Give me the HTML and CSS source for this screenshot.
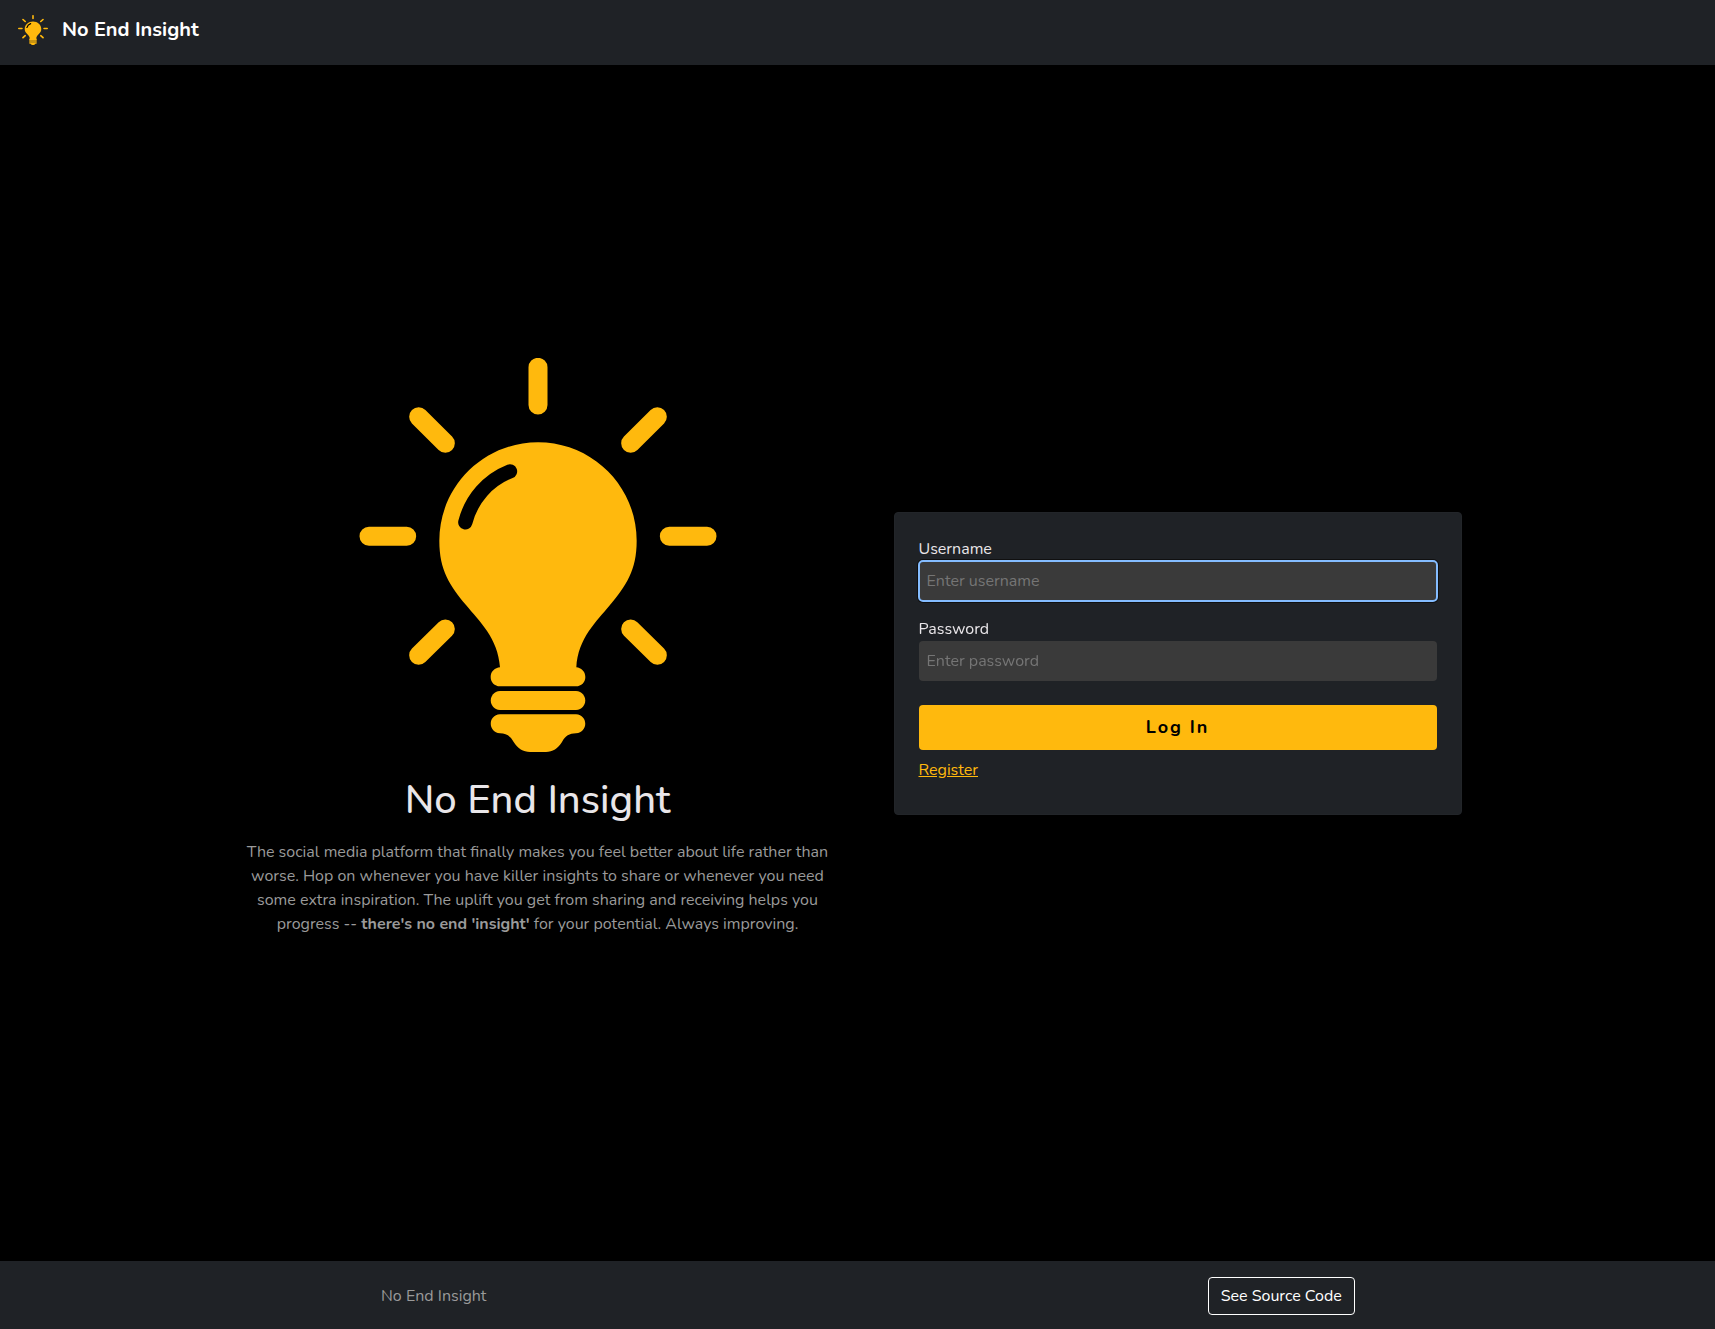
FILE: index.html
```html
<!DOCTYPE html>
<html lang="en">
<head>
<meta charset="utf-8">
<meta name="viewport" content="width=device-width, initial-scale=1">
<title>No End Insight</title>
<link rel="stylesheet" href="styles.css">
</head>
<body>
<header class="navbar">
  <a class="brand" href="#">
    <svg class="brand-icon" viewBox="28 24 1072 1182" preserveAspectRatio="none" aria-hidden="true"><use href="#bulb"/></svg>
    <span>No End Insight</span>
  </a>
</header>

<main class="login-page">
  <section class="intro">
    <svg class="intro-icon" viewBox="24 24 1080 1182" role="img" aria-label="Light bulb">
      <g id="bulb">
        <path class="ray" d="M564 52V165M206 200L286 280M922 200L842 280M57 559H170M958 559H1071M286 837L206 916M842 837L922 916"/>
        <path class="glass" d="M564 277C728 277 860 410 860 572C860 662 828 706 780 765C740 814 684 864 679 952C693 954 706 964 706 981C706 997 694 1009 678 1009H450C434 1009 422 997 422 981C422 964 435 954 450 952C444 864 388 814 348 765C300 706 268 662 268 572C268 410 400 277 564 277Z"/>
        <path class="glass" d="M450 1023H678C715 1026 715 1077 678 1080H450C413 1077 413 1026 450 1023Z"/>
        <path class="glass" d="M450 1093H678C715 1096 715 1146 678 1150C658 1151 646 1157 636 1176C624 1196 608 1206 588 1206H540C520 1206 503 1196 491 1176C481 1157 469 1151 450 1150C413 1146 413 1096 450 1093Z"/>
        <path class="shine" d="M480 364C414 390 364 446 346 517"/>
      </g>
    </svg>
    <h1 class="intro-title">No End Insight</h1>
    <p class="intro-text">The social media platform that finally makes you feel better about life rather than worse. Hop on whenever you have killer insights to share or whenever you need some extra inspiration. The uplift you get from sharing and receiving helps you progress -- <strong>there's no end 'insight'</strong> for your potential. Always improving.</p>
  </section>

  <section class="form-column">
    <form class="card">
      <div class="field">
        <label for="username">Username</label>
        <input class="input" id="username" type="text" placeholder="Enter username" autofocus>
      </div>
      <div class="field">
        <label for="password">Password</label>
        <input class="input" id="password" type="password" placeholder="Enter password">
      </div>
      <button class="submit" type="submit">Log In</button>
      <a class="register" href="#">Register</a>
    </form>
  </section>
</main>

<footer class="footer">
  <span>No End Insight</span>
  <a class="source" href="#">See Source Code</a>
</footer>
</body>
</html>
```
FILE: styles.css
```css
* { box-sizing: border-box; }

body {
  margin: 0;
  min-height: 100vh;
  display: flex;
  flex-direction: column;
  background: #000;
  color: #e9e6e9;
  font: 400 16px/24px Nunito, Lato, sans-serif;
}

.navbar {
  display: flex;
  padding: 15px 18px 20px;
  background: #1f2226;
}

.brand {
  display: flex;
  gap: 14px;
  color: #fff;
  font-size: 20px;
  font-weight: 700;
  line-height: 30px;
  text-decoration: none;
}

.brand-icon {
  width: 30px;
  height: 30px;
}

.ray,
.shine {
  fill: none;
  stroke: #ffb90d;
  stroke-width: 57;
  stroke-linecap: round;
}

.glass { fill: #ffb90d; }

.shine {
  stroke: #000;
  stroke-width: 43;
}

.login-page {
  flex: 1;
  display: grid;
  grid-template-columns: 1fr 1fr;
  align-items: center;
  width: 100%;
  max-width: 1280px;
  margin: 0 auto;
}

.intro {
  display: flex;
  flex-direction: column;
  align-items: center;
  padding: 0 24px 32px;
  text-align: center;
}

.intro-icon {
  width: 360px;
  max-width: 100%;
  height: auto;
}

.intro-title {
  margin: 24px 0 16px;
  font-size: 40px;
  font-weight: 500;
  line-height: 48px;
}

.intro-text {
  margin: 0;
  color: #9a9a9a;
}

.form-column { padding: 0 36px; }

.card {
  display: flex;
  flex-direction: column;
  padding: 24px 24px 32px;
  border: 1px solid #222529;
  border-radius: 4px;
  background: #1f2226;
}

.field {
  display: flex;
  flex-direction: column;
  margin-bottom: 16px;
}

.input {
  height: 40px;
  padding: 0 8px;
  border: 0;
  border-radius: 4px;
  background: #3a3a3a;
  color: #e9e6e9;
  font: inherit;
}

.input::placeholder { color: #757575; }

.input:focus {
  outline: 2px solid #84bcff;
  outline-offset: -1px;
  box-shadow: 0 0 0 2px #101010;
}

.submit {
  height: 45px;
  margin: 8px 0;
  border: 0;
  border-radius: 4px;
  background: #ffb90d;
  color: #000;
  font: 700 18px/27px Nunito, Lato, sans-serif;
  letter-spacing: 2px;
}

.register {
  align-self: flex-start;
  color: #ffb90d;
}

.footer {
  display: grid;
  grid-template-columns: 1fr 1fr;
  align-items: center;
  justify-items: center;
  padding: 16px 10px 14px;
  background: #1f2226;
  color: #9a9a9a;
}

.source {
  padding: 6px 12px;
  border: 1px solid #fff;
  border-radius: 4px;
  color: #fff;
  text-decoration: none;
}
```
